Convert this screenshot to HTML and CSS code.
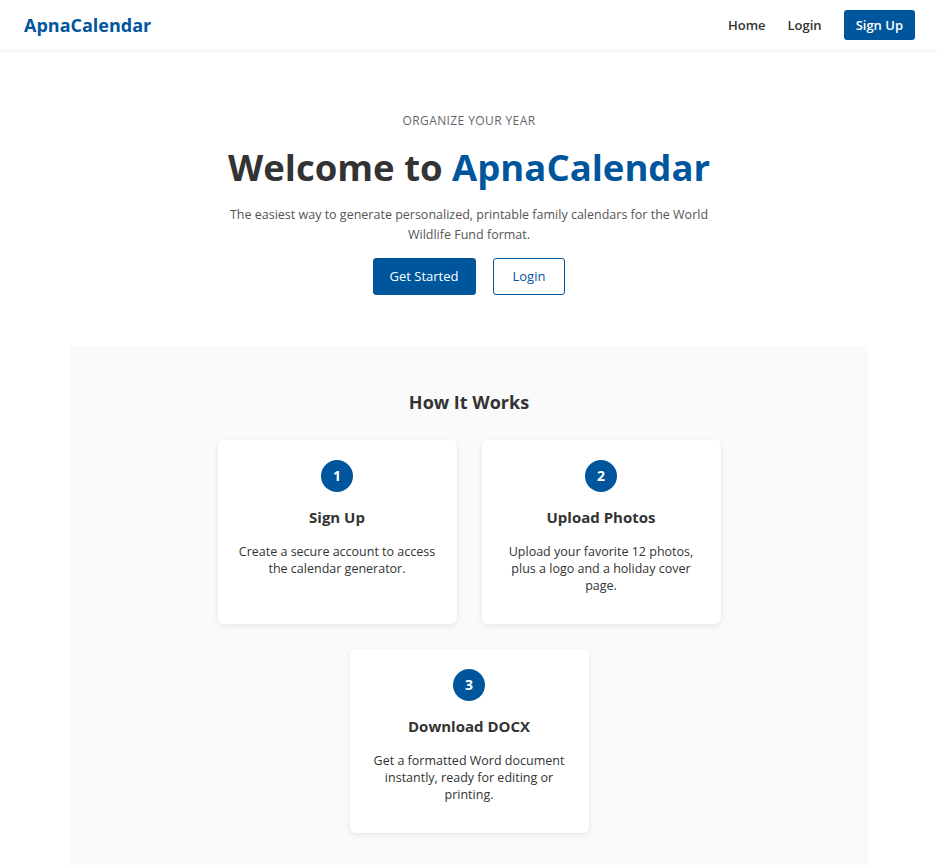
FILE: index.html
```html
<!DOCTYPE html>
<html lang="en">
<head>
    <meta charset="UTF-8">
    <meta name="viewport" content="width=device-width, initial-scale=1.0">
    <title>ApnaCalendar</title>
    <link rel="stylesheet" href="styles.css">
</head>
<body>
    <header class="navbar">
        <a class="logo" href="#">ApnaCalendar</a>
        <nav class="nav">
            <a href="#">Home</a>
            <a href="#">Login</a>
            <a class="btn-signup" href="#">Sign Up</a>
        </nav>
    </header>

    <!-- hero -->
    <section class="hero">
        <p class="eyebrow">ORGANIZE YOUR YEAR</p>
        <h1>Welcome to <span class="brand">ApnaCalendar</span></h1>
        <p class="lead">The easiest way to generate personalized, printable family calendars for the World Wildlife Fund format.</p>
        <div class="actions">
            <a class="btn btn-primary" href="#">Get Started</a>
            <a class="btn btn-outline" href="#">Login</a>
        </div>
    </section>

    <!-- how it works -->
    <section class="steps">
        <h2>How It Works</h2>
        <div class="cards">
            <div class="card">
                <div class="num">1</div>
                <h3>Sign Up</h3>
                <p>Create a secure account to access the calendar generator.</p>
            </div>
            <div class="card">
                <div class="num">2</div>
                <h3>Upload Photos</h3>
                <p>Upload your favorite 12 photos, plus a logo and a holiday cover page.</p>
            </div>
            <div class="card">
                <div class="num">3</div>
                <h3>Download DOCX</h3>
                <p>Get a formatted Word document instantly, ready for editing or printing.</p>
            </div>
        </div>
    </section>
</body>
</html>
```

FILE: styles.css
```css
*{box-sizing: border-box;}
body{margin: 0;font-family: "Open Sans", "Noto Sans", sans-serif;color: #333;background: #fff;}
a{text-decoration: none;}

.navbar{height: 50px;display: flex;align-items: center;justify-content: space-between;padding: 0 23px 0 24px;background: #fff;box-shadow: 0 1px 3px rgba(0,0,0,0.08);}
.logo{font-size: 18px;font-weight: 700;color: #00569c;}
.nav{display: flex;align-items: center;gap: 22px;}
.nav a{font-size: 13px;font-weight: 600;color: #333;}
.nav .btn-signup{background: #00569c;color: #fff;padding: 6px 12px;border-radius: 3px;line-height: 18px;}

.hero{text-align: center;padding: 63px 20px 51px;}
.eyebrow{margin: 0 0 15px;font-size: 12px;line-height: 16px;color: #666;letter-spacing: 0.4px;}
.hero h1{margin: 0 0 15px;font-size: 36.5px;font-weight: 700;color: #333;line-height: 46px;}
.brand{color: #00569c;}
.lead{margin: 0 auto 13px;max-width: 490px;font-size: 12.5px;line-height: 20px;color: #555;}
.actions{display: flex;justify-content: center;gap: 17px;}
.btn{display: inline-block;font-size: 13px;line-height: 35px;height: 37px;padding: 0 19px;border-radius: 3px;border: 1px solid #00569c;}
.btn-primary{background: #00569c;color: #fff;padding: 0 16px;}
.btn-outline{background: #fff;color: #00569c;}

.steps{margin: 0 70px;background: #fafafa;padding: 44px 20px 32px;text-align: center;}
.steps h2{margin: 0 0 26px;font-size: 18px;font-weight: 700;}
.cards{display: flex;flex-wrap: wrap;justify-content: center;gap: 25px;max-width: 520px;margin: 0 auto;}
.card{width: 239px;background: #fff;border-radius: 6px;box-shadow: 0 2px 6px rgba(0,0,0,0.08);padding: 20px 18px 30px;}
.num{width: 32px;height: 32px;margin: 0 auto;border-radius: 50%;background: #00569c;color: #fff;font-size: 14px;font-weight: 700;line-height: 32px;}
.card h3{margin: 15px 0 16px;font-size: 15px;font-weight: 700;}
.card p{margin: 0;font-size: 12.5px;line-height: 17px;color: #333;}
```
